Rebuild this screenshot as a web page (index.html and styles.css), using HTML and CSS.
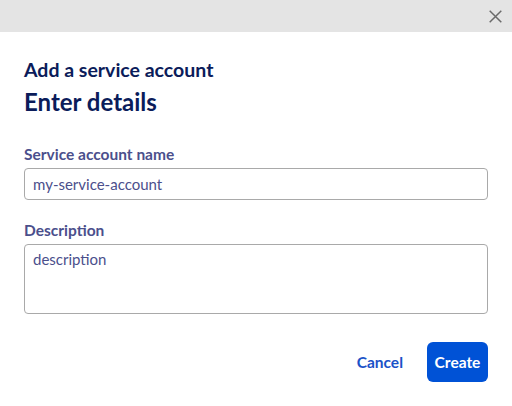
FILE: index.html
```html
<!DOCTYPE html>
<html>
<head>
<meta charset="utf-8">
<link rel="stylesheet" href="styles.css">
</head>
<body>
<div class="modal">
  <div class="header">
    <button class="close" aria-label="Close">
      <svg width="13" height="13" viewBox="0 0 13 13"><path d="M0.7 0.7 L12.3 12.3 M12.3 0.7 L0.7 12.3" stroke="#6a6a6a" stroke-width="1.5" fill="none"/></svg>
    </button>
  </div>
  <div class="body">
    <h2 class="subtitle">Add a service account</h2>
    <h1 class="title">Enter details</h1>
    <div class="field">
      <label class="label">Service account name</label>
      <div class="input">my-service-account</div>
    </div>
    <div class="field second">
      <label class="label">Description</label>
      <div class="input textarea">description</div>
    </div>
    <div class="actions">
      <button class="btn link">Cancel</button>
      <button class="btn primary">Create</button>
    </div>
  </div>
</div>
</body>
</html>
```
FILE: styles.css
```css
* { box-sizing: border-box; }
html, body { margin: 0; padding: 0; background: #fff; }
body { font-family: Lato, "Open Sans", sans-serif; }
.modal { width: 512px; height: 406px; display: flex; flex-direction: column; }
.header { height: 32px; background: #e4e4e4; display: flex; justify-content: flex-end; align-items: center; padding-right: 10px; }
.close { border: 0; background: none; padding: 0; width: 13px; height: 13px; display: flex; }
.body { padding: 0 24px; display: flex; flex-direction: column; }
.subtitle { margin: 26px 0 0; font-size: 19.5px; line-height: 24px; font-weight: 700; color: #0b1c5a; }
.title { margin: 6px 0 0; font-size: 24px; line-height: 28px; font-weight: 700; color: #0b1c5a; }
.field { display: flex; flex-direction: column; margin-top: 28px; }
.field.second { margin-top: 20px; }
.label { font-size: 15.5px; line-height: 20px; font-weight: 700; color: #4b4f8c; margin-bottom: 4px; }
.input { height: 32px; border: 1px solid #a9a9a9; border-radius: 4px; padding: 0 8px; font-size: 15px; line-height: 30px; color: #4b4f8c; }
.textarea { height: 70px; line-height: 20px; padding-top: 4px; }
.actions { display: flex; justify-content: flex-end; align-items: center; gap: 24px; margin-top: 28px; }
.btn { font-family: inherit; font-size: 15.5px; font-weight: 700; border: 0; cursor: pointer; }
.link { background: none; color: #1a52c8; padding: 0; }
.primary { background: #0052d6; color: #fff; height: 40px; width: 61px; border-radius: 6px; padding: 0; }
```
